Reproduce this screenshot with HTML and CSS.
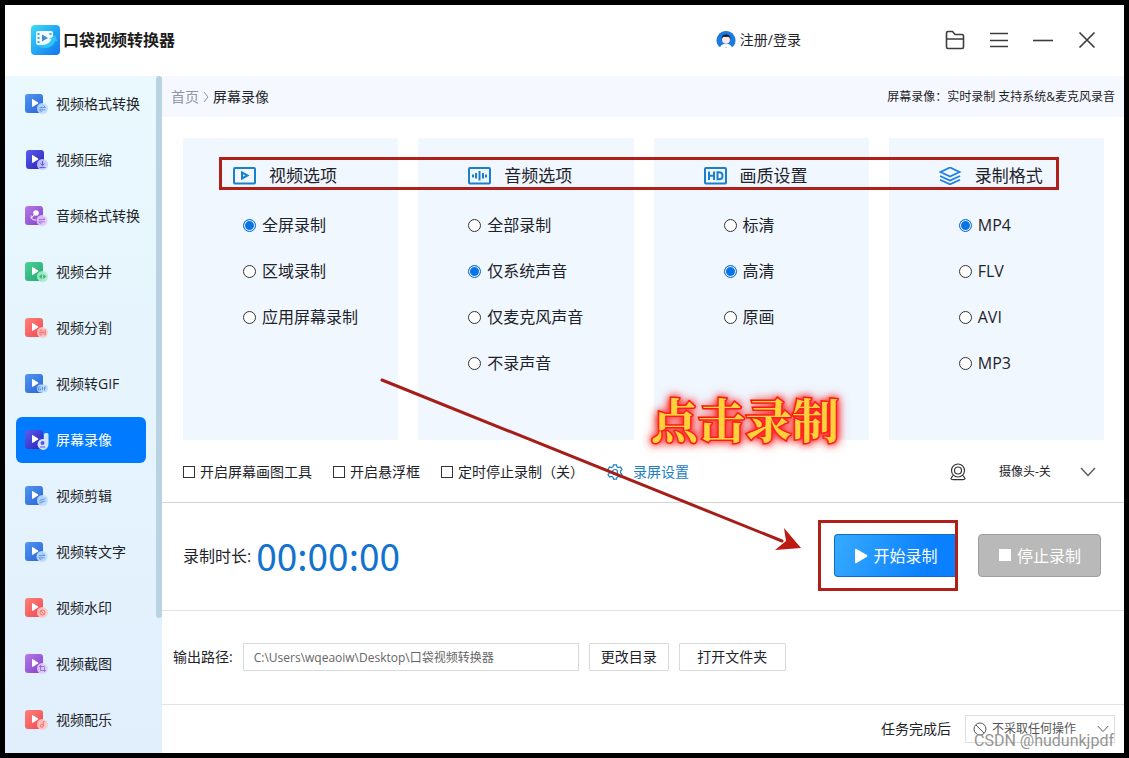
FILE: index.html
```
<!DOCTYPE html>
<html lang="zh-CN">
<head>
<meta charset="utf-8">
<title>口袋视频转换器</title>
<link rel="stylesheet" href="styles.css">
</head>
<body>
<svg class="defs" aria-hidden="true">
  <defs>
    <linearGradient id="g-blue" x1="0" y1="0" x2="1" y2="1"><stop offset="0" stop-color="#4f97f0"/><stop offset="1" stop-color="#2b63d6"/></linearGradient>
    <linearGradient id="g-indigo" x1="0" y1="0" x2="1" y2="1"><stop offset="0" stop-color="#5a5df0"/><stop offset="1" stop-color="#2a22b4"/></linearGradient>
    <linearGradient id="g-purple" x1="0" y1="0" x2="1" y2="1"><stop offset="0" stop-color="#b57be6"/><stop offset="1" stop-color="#8340cc"/></linearGradient>
    <linearGradient id="g-green" x1="0" y1="0" x2="1" y2="1"><stop offset="0" stop-color="#4fcf98"/><stop offset="1" stop-color="#1fa870"/></linearGradient>
    <linearGradient id="g-red" x1="0" y1="0" x2="1" y2="1"><stop offset="0" stop-color="#ff8078"/><stop offset="1" stop-color="#ee4a52"/></linearGradient>
    <linearGradient id="g-logo" x1="0" y1="0" x2="1" y2="1"><stop offset="0" stop-color="#3fdcf8"/><stop offset=".5" stop-color="#22a8f4"/><stop offset="1" stop-color="#1673ee"/></linearGradient>
    <symbol id="play" viewBox="0 0 24 20"><path d="M7 5.700q0-1 .9-.5l5.200 3.200q.8.600 0 1.100l-5.200 3.200q-.9.500-.9-.5z" fill="#fff"/></symbol>
  </defs>
</svg>

<div class="window">
  <header class="titlebar">
    <h1 class="brand">
      <svg class="brand-logo" viewBox="0 0 30 30" aria-hidden="true">
        <rect width="29" height="30" rx="4" fill="url(#g-logo)"/>
        <rect x="5" y="6" width="17" height="14" rx="2" fill="#f2fbff"/>
        <path d="M6.500 8h2v2h-2zM6.500 12h2v2h-2zM6.500 16h2v2h-2zM18.500 8h2v2h-2z" fill="#2aaff2"/>
        <path d="M11 9.500l6 3.500-6 3.500z" fill="#4a86c8"/>
        <path d="M5 19.500c7 2 14-.5 15.500-5.500l-2.500.3 6-4.300 2.500 6.500-2.200-.8C22 23 12 26 5 19.500z" fill="#2fc4fb"/>
      </svg>
      <span>口袋视频转换器</span>
    </h1>
    <button class="login" type="button">
      <svg class="avatar" viewBox="0 0 20 18" aria-hidden="true">
        <path d="M10 0a9.500 9.500 0 0 1 9 12.500Q18 15.500 15.500 16.500L4.500 16.500Q2 15.500 1 12.500A9.500 9.500 0 0 1 10 0z" fill="#1a7ae0"/>
        <path d="M4 17q.5-4 6-4.500 5.500.5 6 4.500-3 1.500-6-1-3 2.500-6 1z" fill="#fff"/>
        <circle cx="10" cy="8.500" r="4" fill="#fde9e2"/>
        <path d="M5.800 8.500Q5 3.500 10 3.200q5 .3 4.200 5.300-.6-2.500-2-2.700-2.200.6-4.400 0-1.400.2-2 2.700z" fill="#1a2440"/>
      </svg>
      <span>注册/登录</span>
    </button>
    <div class="window-controls">
      <button type="button" aria-label="文件夹"><svg viewBox="0 0 20 20"><path d="M1.500 17V3q0-1.500 1.500-1.500h4.500l2.500 3h7q1.500 0 1.500 1.500v11q0 1.500-1.500 1.500H3Q1.500 18.500 1.500 17zM1.500 9h17"/></svg></button>
      <button type="button" aria-label="菜单"><svg class="thin" viewBox="0 0 20 20"><path d="M1 3.500h18M1 10.500h18M1 16.500h18"/></svg></button>
      <button type="button" aria-label="最小化"><svg viewBox="0 0 20 20"><path d="M0 10.500h20"/></svg></button>
      <button type="button" aria-label="关闭"><svg viewBox="0 0 20 20"><path d="M2.500 2.500l15 15M17.500 2.500l-15 15"/></svg></button>
    </div>
  </header>

  <div class="body">
    <aside class="sidebar">
      <nav class="menu">
        <a class="menu-item" href="#"><svg viewBox="0 0 24 20"><rect width="18" height="19" rx="3" fill="url(#g-blue)"/><use href="#play"/><circle class="badge" cx="17.500" cy="14.500" r="5.500" fill="#bcdcff"/><path class="sign" d="M14.500 13.500h6l-2-2M20.500 15.800h-6l2 2" stroke="#3a7be0"/></svg>视频格式转换</a>
        <a class="menu-item" href="#"><svg viewBox="0 0 24 20"><rect x="1" width="18" height="19" rx="3" fill="url(#g-indigo)"/><use href="#play"/><circle class="badge" cx="17.500" cy="14.500" r="5.500" fill="#c5c9ff"/><path class="sign" d="M17.500 11v4M15.500 13.500l2 2 2-2M14.500 17.500h6" stroke="#4038c8"/></svg>视频压缩</a>
        <a class="menu-item" href="#"><svg viewBox="0 0 24 20"><rect width="18" height="19" rx="3" fill="url(#g-purple)"/><circle cx="11" cy="7" r="2.800" fill="#fff"/><path d="M9.500 8.500L6 12.500M6 9.500q0 5 5 4.500" stroke="#fff"/><circle class="badge" cx="17" cy="14.500" r="5.500" fill="#e2c8fb"/><path class="sign" d="M14 13.500h6l-2-2M20 15.800h-6l2 2" stroke="#9350d8"/></svg>音频格式转换</a>
        <a class="menu-item" href="#"><svg viewBox="0 0 24 20"><rect width="18" height="19" rx="3" fill="url(#g-green)"/><use href="#play"/><circle class="badge" cx="17.500" cy="14.500" r="5.500" fill="#a8ecca"/><path d="M16.800 12l-3 2.500 3 2.500zM18.200 12l3 2.500-3 2.500z" fill="#34b67e"/></svg>视频合并</a>
        <a class="menu-item" href="#"><svg viewBox="0 0 24 20"><rect width="18" height="19" rx="3" fill="url(#g-red)"/><use href="#play"/><circle class="badge" cx="17.500" cy="14.500" r="5.500" fill="#ffc9c5"/><path class="sign" d="M15 12h2v5h-2zM19 12h1.500v5H19zM14.500 14.500h6" stroke="#f06a6a"/></svg>视频分割</a>
        <a class="menu-item" href="#"><svg viewBox="0 0 24 20"><rect width="18" height="19" rx="3" fill="url(#g-blue)"/><use href="#play"/><rect class="badge" x="12" y="10.500" width="11" height="8" rx="4" fill="#bcdcff"/><path class="sign" d="M15.500 13h-2v3h2v-1.500M17.500 13v3M19.500 16.500V13h1.500M19.500 14.700h1" stroke="#3a7be0"/></svg>视频转GIF</a>
        <a class="menu-item active" href="#" aria-current="page"><svg viewBox="0 0 24 20"><rect width="18" height="19" rx="3" fill="url(#g-indigo)"/><use href="#play"/><path d="M19 4.500q0-1.500 1.500-1.500H22q1.500 0 1.500 1.500V14a5.500 5.500 0 1 1-4.500-5z" fill="#d3e2ff"/><circle cx="17.500" cy="13" r="2" fill="#5d55e6"/><path d="M14.800 17h5.400" stroke="#5d55e6"/></svg>屏幕录像</a>
        <a class="menu-item" href="#"><svg viewBox="0 0 24 20"><rect width="18" height="19" rx="3" fill="url(#g-blue)"/><use href="#play"/><circle class="badge" cx="17.500" cy="14.500" r="5.500" fill="#bcdcff"/><path class="sign" d="M14.500 14.500l6-2M14.500 16.800l6-2" stroke="#3a7be0"/></svg>视频剪辑</a>
        <a class="menu-item" href="#"><svg viewBox="0 0 24 20"><rect width="18" height="19" rx="3" fill="url(#g-blue)"/><use href="#play"/><circle class="badge" cx="17" cy="14.500" r="5.500" fill="#bcdcff"/><path class="sign" d="M14 13.500h6l-2-2M20 15.800h-6l2 2" stroke="#3a7be0"/></svg>视频转文字</a>
        <a class="menu-item" href="#"><svg viewBox="0 0 24 20"><rect width="18" height="19" rx="3" fill="url(#g-red)"/><use href="#play"/><circle class="badge" cx="17.500" cy="14.500" r="5.500" fill="#ffc9c5"/><circle class="sign" cx="17.500" cy="14.500" r="2.500" stroke="#e8545c" fill="none"/><path class="sign" d="M15.800 12.700l3.500 3.600" stroke="#e8545c"/></svg>视频水印</a>
        <a class="menu-item" href="#"><svg viewBox="0 0 24 20"><rect width="18" height="19" rx="3" fill="url(#g-purple)"/><use href="#play"/><circle class="badge" cx="17.500" cy="14.500" r="5.500" fill="#e0d0fb"/><path class="sign" d="M15.500 11v5.500h5.500M14 12.500h5.500V18" stroke="#8a4fd8"/></svg>视频截图</a>
        <a class="menu-item" href="#"><svg viewBox="0 0 24 20"><rect width="18" height="19" rx="3" fill="url(#g-red)"/><use href="#play"/><circle class="badge" cx="17.500" cy="14.500" r="5.500" fill="#ffc9c5"/><circle class="sign" cx="16.800" cy="15.800" r="1.500" stroke="#e8545c" fill="none"/><path class="sign" d="M18.300 15.800V11.500h1.500" stroke="#e8545c"/></svg>视频配乐</a>
      </nav>
      <div class="scrollbar"></div>
    </aside>

    <main class="content">
      <div class="crumbs">
        <div class="path"><a href="#">首页</a><svg viewBox="0 0 6 12" aria-hidden="true"><path d="M1 1l4 5-4 5"/></svg><span>屏幕录像</span></div>
        <p class="hint">屏幕录像：实时录制 支持系统&amp;麦克风录音</p>
      </div>

      <form class="recorder">
        <section class="panels">
          <fieldset class="panel indent-medium">
            <legend><svg viewBox="0 0 24 18"><rect x="1" y="1" width="21" height="15.500" rx="1"/><path d="M9 5.500v6l5.500-3z"/></svg>视频选项</legend>
            <label><input type="radio" name="area" checked>全屏录制</label>
            <label><input type="radio" name="area">区域录制</label>
            <label><input type="radio" name="area">应用屏幕录制</label>
          </fieldset>
          <fieldset class="panel">
            <legend><svg viewBox="0 0 24 18"><rect x="1" y="1" width="21" height="15.500" rx="1"/><path d="M5 7.500v3M8 6v5.500M11.500 4v9.500M15 6v5.500M18 7.500v3"/></svg>音频选项</legend>
            <label><input type="radio" name="audio">全部录制</label>
            <label><input type="radio" name="audio" checked>仅系统声音</label>
            <label><input type="radio" name="audio">仅麦克风声音</label>
            <label><input type="radio" name="audio">不录声音</label>
          </fieldset>
          <fieldset class="panel indent-large">
            <legend><svg viewBox="0 0 24 18"><rect x="1" y="1" width="21" height="15.500" rx="1"/><path d="M5 4.500v8.500M10 4.500v8.500M5 8.800h5M13.500 5.300v7h1.500q3.500 0 3.500-3.500t-3.500-3.500z"/></svg>画质设置</legend>
            <label><input type="radio" name="quality">标清</label>
            <label><input type="radio" name="quality" checked>高清</label>
            <label><input type="radio" name="quality">原画</label>
          </fieldset>
          <fieldset class="panel indent-large">
            <legend><svg class="layers" viewBox="0 0 24 18"><path d="M11 0.500l9.500 4.500-9.500 4.500L1.500 5zM1 9l10 4.500L21 9M1 12.800l10 4.500 10-4.500"/></svg>录制格式</legend>
            <label><input type="radio" name="format" checked>MP4</label>
            <label><input type="radio" name="format">FLV</label>
            <label><input type="radio" name="format">AVI</label>
            <label><input type="radio" name="format">MP3</label>
          </fieldset>
          <div class="mark mark-titles"></div>
          <strong class="callout">点击录制</strong>
        </section>

        <section class="options">
          <label><input type="checkbox">开启屏幕画图工具</label>
          <label><input type="checkbox">开启悬浮框</label>
          <label><input type="checkbox">定时停止录制（关）</label>
          <a class="settings" href="#"><svg viewBox="0 0 16 16" aria-hidden="true"><path d="M6.500.8h3l.5 2 1.500.8 2-.6 1.500 2.500-1.400 1.500v2l1.400 1.500-1.500 2.500-2-.6-1.500.8-.5 2h-3l-.5-2-1.500-.8-2 .6L1 10.500 2.400 9V7L1 5.500 2.500 3l2 .6L6 2.800z"/><circle cx="8" cy="8" r="2.500"/></svg>录屏设置</a>
          <div class="camera">
            <svg class="webcam" viewBox="0 0 16 18" aria-hidden="true"><circle cx="8" cy="7.500" r="6.500"/><circle cx="8" cy="7.500" r="3.500"/><path d="M3 12.500l-2 3q0 1.200 2 1.200h10q2 0 2-1.200l-2-3"/></svg>
            <div class="picker">
              <select aria-label="摄像头"><option>摄像头-关</option></select>
              <svg class="chevron" viewBox="0 0 16 10" aria-hidden="true"><path d="M1 1l7 7.500L15 1"/></svg>
            </div>
          </div>
        </section>

        <section class="record">
          <span class="record-label">录制时长:</span>
          <output class="timer">00:00:00</output>
          <div class="record-actions">
            <div class="start-wrap">
              <button class="action start" type="button"><svg viewBox="0 0 14 16" aria-hidden="true"><path d="M1 2q0-1.800 1.600-.9l10 5.700q1.600 1.100 0 2.200L2.600 14.900Q1 15.800 1 14z"/></svg>开始录制</button>
              <div class="mark mark-start"></div>
            </div>
            <button class="action stop" type="button"><svg viewBox="0 0 14 16" aria-hidden="true"><path d="M1 1h12v12H1z"/></svg>停止录制</button>
          </div>
        </section>

        <section class="output">
          <label for="path">输出路径:</label>
          <input id="path" type="text" value="C:\Users\wqeaoiw\Desktop\口袋视频转换器">
          <button class="plain" type="button">更改目录</button>
          <button class="plain wide" type="button">打开文件夹</button>
        </section>
      </form>

      <footer class="footer">
        <label for="after">任务完成后</label>
        <div class="picker boxed">
          <svg class="ban" viewBox="0 0 14 14" aria-hidden="true"><circle cx="7" cy="7" r="6"/><path d="M3 3l8 8"/></svg>
          <select id="after"><option>不采取任何操作</option></select>
          <svg class="chevron small" viewBox="0 0 16 10" aria-hidden="true"><path d="M1 1l7 7.500L15 1"/></svg>
        </div>
        <span class="watermark">CSDN @hudunkjpdf</span>
      </footer>

      <svg class="arrow" viewBox="0 0 422 174" aria-hidden="true"><path d="M2 2L402 163" stroke="#a51e18" stroke-width="3" stroke-linecap="round"/><path d="M421 170L404 150l2 13-11 9z" fill="#bd1a12"/></svg>
    </main>
  </div>
</div>
</body>
</html>
```
FILE: styles.css
```
* { box-sizing: border-box; }

body {
  display: flex;
  min-height: 100vh;
  margin: 0;
  padding: 5px;
  background: #000;
  color: #1e2329;
  font: 14px/20px "Open Sans", "Noto Sans CJK SC", sans-serif;
}

button, input, select { font: inherit; color: inherit; }
button { cursor: pointer; }
a { color: inherit; text-decoration: none; }
svg { flex: none; fill: none; }
.defs { position: absolute; width: 0; height: 0; }

.window {
  display: flex;
  flex: 1;
  flex-direction: column;
  min-width: 0;
  background: #fff;
}

/* Title bar */
.titlebar {
  display: flex;
  align-items: center;
  height: 71px;
  padding: 0 27px 2px 26px;
}
.brand {
  display: flex;
  align-items: center;
  gap: 2px;
  margin: 0;
  color: #201c1c;
  font-size: 16px;
  font-weight: 700;
}
.brand-logo { width: 30px; height: 30px; }
.login {
  display: flex;
  align-items: center;
  gap: 4px;
  margin-left: auto;
  padding: 0;
  border: 0;
  background: none;
}
.avatar { width: 20px; height: 18px; }
.window-controls {
  display: flex;
  gap: 24px;
  margin-left: 144px;
}
.window-controls button {
  display: flex;
  width: 20px;
  height: 20px;
  padding: 0;
  border: 0;
  background: none;
}
.window-controls svg {
  width: 20px;
  height: 20px;
  stroke: #3c3c3c;
  stroke-width: 1.6;
}
.window-controls .thin { stroke-width: 1.3; }

.body { display: flex; flex: 1; }

/* Sidebar */
.sidebar {
  display: flex;
  flex: none;
  width: 157px;
  background: linear-gradient(#e9f9fe, #e5f4fd 50%, #e1effd);
}
.menu {
  display: flex;
  flex: 1;
  flex-direction: column;
  gap: 10px;
  padding: 5px 10px 10px 11px;
}
.menu-item {
  display: flex;
  align-items: center;
  gap: 7px;
  height: 46px;
  padding-left: 9px;
  border-radius: 6px;
}
.menu-item svg { width: 24px; height: 20px; }
.menu-item .badge { opacity: .9; }
.menu-item .sign { stroke-opacity: .7; }
.menu-item.active { background: #007aff; color: #fff; }
.scrollbar {
  width: 6px;
  height: 80%;
  border-radius: 3px;
  background: #b9d3e2;
}

/* Content */
.content {
  position: relative;
  display: flex;
  flex: 1;
  flex-direction: column;
  min-width: 0;
}
.crumbs {
  display: flex;
  align-items: center;
  justify-content: space-between;
  height: 41px;
  padding: 0 9px;
  background: #f5f9ff;
}
.path { display: flex; align-items: center; gap: 4px; }
.path a { color: #8f94a8; }
.path svg { width: 6px; height: 12px; stroke: #8f94a8; }
.hint { margin: 0; font-size: 12px; }

.recorder { display: flex; flex: 1; flex-direction: column; }

.panels {
  position: relative;
  display: grid;
  flex: 1;
  grid-template-columns: repeat(4, 1fr);
  gap: 20px;
  margin: 21px 20px 0 21px;
}
.panel {
  display: flex;
  flex-direction: column;
  min-width: 0;
  margin: 0;
  padding: 22px 0 0 50px;
  border: 0;
  background: #f0f7ff;
}
.panel legend {
  display: flex;
  float: left;
  align-items: center;
  gap: 12px;
  height: 32px;
  margin-bottom: 10px;
  padding: 0;
  font-size: 17px;
}
.panel legend svg {
  width: 24px;
  height: 18px;
  stroke: #1a80cc;
  stroke-width: 2;
}
.panel legend .layers { stroke: #1f7fe0; stroke-width: 1.8; }
.panel label {
  display: flex;
  align-items: center;
  gap: 6px;
  height: 46px;
  font-size: 16px;
}
.indent-medium label { padding-left: 10px; }
.indent-large label { padding-left: 20px; }
.panel input {
  appearance: none;
  width: 13px;
  height: 13px;
  margin: 0;
  border: 1px solid #333;
  border-radius: 50%;
  background: #fff;
}
.panel input:checked {
  border-color: #0a74e6;
  background: #0a74e6;
  box-shadow: inset 0 0 0 1px #fff;
}

.options {
  display: flex;
  align-items: center;
  gap: 21px;
  height: 63px;
  padding: 2px 28px 0 21px;
  border-bottom: 1px solid #d4d4d4;
}
.options label { display: flex; align-items: center; gap: 5px; }
.options input {
  appearance: none;
  width: 12px;
  height: 12px;
  margin: 0;
  border: 1px solid #333;
  background: #fff;
}
.settings { display: flex; align-items: center; gap: 10px; padding-left: 2px; color: #1d80c3; }
.settings svg { width: 16px; height: 16px; stroke: #1d80c3; stroke-width: 1.2; }
.camera {
  display: flex;
  align-items: center;
  gap: 33px;
  margin-left: auto;
  font-size: 12px;
}
.webcam { width: 16px; height: 18px; stroke: #333; stroke-width: 1.2; }

.picker { display: grid; align-items: center; width: 97px; }
.picker > * { grid-row: 1; grid-column: 1; }
.picker svg { pointer-events: none; }
.picker select {
  appearance: none;
  width: 100%;
  height: 26px;
  padding: 0;
  border: 0;
  background: transparent;
}
.chevron { justify-self: end; width: 16px; height: 10px; stroke: #555; stroke-width: 1.3; }

.record {
  display: flex;
  align-items: center;
  gap: 5px;
  height: 108px;
  padding: 0 23px 2px 21px;
  border-bottom: 1px solid #e2e2e2;
}
.record-label { font-size: 16px; }
.timer {
  padding-bottom: 2px;
  color: #1273cf;
  font: 37px/48px "Noto Sans CJK SC", sans-serif;
}
.record-actions { display: flex; gap: 21px; margin-left: auto; }
.start-wrap { position: relative; }
.action {
  display: flex;
  align-items: center;
  justify-content: center;
  gap: 5px;
  width: 123px;
  height: 43px;
  padding: 0;
  border: 1px solid #0f6fc4;
  border-radius: 4px;
  background: linear-gradient(110deg, #36abff, #0a80ff 75%);
  color: #fff;
  font-size: 16px;
}
.action svg { width: 14px; height: 16px; fill: #fff; }
.start { border-right: 0; border-radius: 4px 0 0 4px; }
.stop { border-color: #9f9f9f; background: #b9b9b9; }

.output {
  display: flex;
  align-items: center;
  gap: 10px;
  height: 94px;
  padding: 0 0 2px 11px;
  border-bottom: 1px solid #e2e2e2;
}
.output input {
  width: 336px;
  height: 28px;
  padding: 0 10px;
  border: 1px solid #d9d9d9;
  background: #fff;
  color: #666;
  font-size: 12px;
}
.plain {
  width: 80px;
  height: 28px;
  padding: 0;
  border: 1px solid #d9d9d9;
  border-radius: 1px;
  background: #fff;
}
.plain.wide { width: 107px; }

.footer {
  position: relative;
  display: flex;
  align-items: center;
  justify-content: flex-end;
  gap: 14px;
  height: 48px;
  padding-right: 9px;
}
.boxed {
  width: 150px;
  border: 1px solid #ddd;
  color: #555;
  font-size: 12px;
}
.boxed select { padding-left: 26px; }
.ban { width: 14px; height: 14px; margin-left: 7px; stroke: #555; }
.chevron.small { width: 12px; height: 8px; margin-right: 5px; }

/* Annotations laid over the window */
.mark {
  position: absolute;
  border: 3px solid #b01f18;
  pointer-events: none;
}
.mark-titles { top: 19px; right: 45px; left: 36px; height: 33px; }
.mark-start { top: -14px; right: -1px; bottom: -14px; left: -16px; }
.callout {
  position: absolute;
  right: 265px;
  bottom: -10px;
  color: #ffd23c;
  font: 700 47px/64px "Noto Serif CJK SC", "Noto Sans CJK SC", serif;
  -webkit-text-stroke: 3px #f01400;
  paint-order: stroke fill;
  text-shadow: 0 0 6px #ff2020, 0 0 8px #ff2020, 0 0 10px #ff2020, 0 0 14px #ff4040;
  pointer-events: none;
}
.arrow {
  position: absolute;
  top: 302px;
  left: 218px;
  width: 422px;
  height: 174px;
  pointer-events: none;
}
.watermark {
  position: absolute;
  right: 10px;
  bottom: 2px;
  color: #959595;
  font: 16px/20px Roboto, "Liberation Sans", sans-serif;
  pointer-events: none;
}
```
